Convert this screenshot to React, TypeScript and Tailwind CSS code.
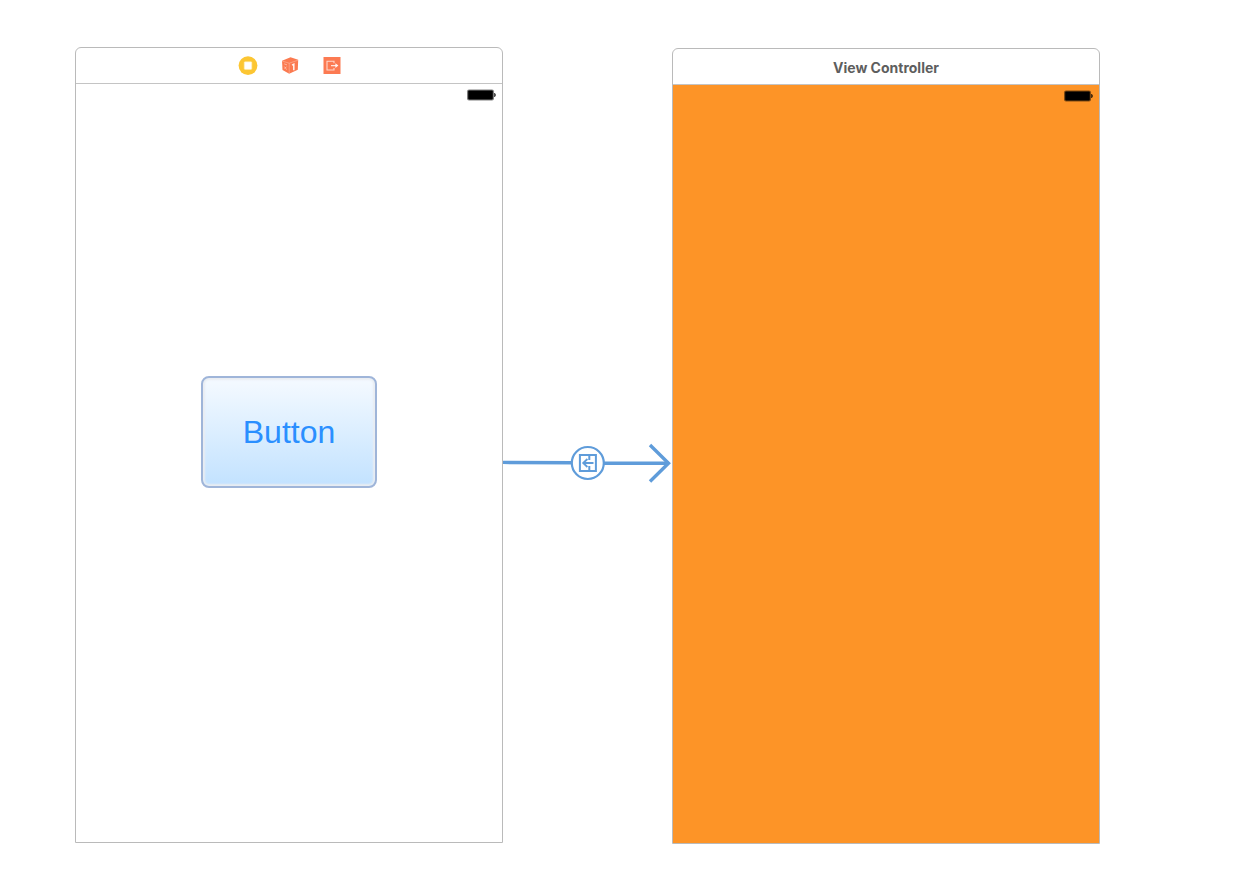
import type { ReactNode } from 'react';

interface SceneProps {
  label: string;
  header: ReactNode;
  canvasClass: string;
  children?: ReactNode;
}

function BatteryIcon() {
  return (
    <svg width="30" height="14" viewBox="0 0 30 14" aria-hidden="true">
      <rect x="1" y="1.5" width="27" height="11" rx="2" fill="#000" fillOpacity="0.5" />
      <rect x="2.2" y="2.6" width="24.6" height="8.8" rx="0.8" fill="#000" />
      <path d="M28.2 5h.6q1 .8 1 2t-1 2h-.6z" fill="#000" fillOpacity="0.85" />
    </svg>
  );
}

function ViewControllerIcon() {
  return (
    <svg width="20" height="20" viewBox="0 0 20 20" aria-hidden="true">
      <circle cx="10" cy="9.6" r="9.4" fill="#fcc633" />
      <rect x="6.2" y="5.8" width="7.6" height="7.6" rx="0.8" fill="#fff" stroke="#fde9a6" strokeWidth="0.6" />
    </svg>
  );
}

function FirstResponderIcon() {
  return (
    <svg width="20" height="20" viewBox="0 0 20 20" aria-hidden="true">
      <path d="M2 4.8 10.5 1.2 18.2 3.8 17.8 13.8 9.2 17.8 2.5 14z" fill="#fb7a50" />
      <path d="M2 5 9.2 7.2 18 4.2M9.2 7.2v10.4" fill="none" stroke="#fff" strokeOpacity="0.35" strokeWidth="0.8" />
      <path d="M12 9.1l1.8-.9v6" fill="none" stroke="#fff" strokeOpacity="0.9" strokeWidth="1.5" />
      <path d="M4.2 7.9l2.8 1M4.4 10.6l2.2 3M6.6 10.6l-2 2" fill="none" stroke="#fff" strokeOpacity="0.5" strokeWidth="0.9" />
    </svg>
  );
}

function ExitIcon() {
  return (
    <svg width="20" height="20" viewBox="0 0 20 20" aria-hidden="true">
      <rect x="1.5" y="1" width="17" height="17" fill="#fc7a52" />
      <path d="M12 7.2V5.2H5v8.8h7v-2" fill="none" stroke="#fff" strokeOpacity="0.7" strokeWidth="1.1" />
      <path d="M9 9.6h5" fill="none" stroke="#fff" strokeOpacity="0.8" strokeWidth="1.2" />
      <path d="M13.4 7.2 16.4 9.6l-3 2.4z" fill="#fff" fillOpacity="0.9" />
    </svg>
  );
}

function SegueArrow() {
  return (
    <svg
      className="-mx-px h-10 w-[171px] shrink-0"
      viewBox="0 0 171 40"
      fill="none"
      stroke="#5f9cda"
      role="img"
      aria-label="Show segue"
    >
      <path d="M1 19.4 70 19.8M102 20.2h65" strokeWidth="3.4" />
      <path d="M148 2 166.5 20.2 148 38.5" strokeWidth="3.4" />
      <circle cx="85.8" cy="20" r="16" strokeWidth="2.2" fill="#fff" />
      <rect x="77.9" y="12" width="16" height="16" strokeWidth="2" />
      <path d="M87.3 12v5M87.3 23v5" strokeWidth="2" />
      <path d="M91.5 20H81.5M85.4 16 81.2 20l4.2 4" strokeWidth="1.8" />
    </svg>
  );
}

function Scene({ label, header, canvasClass, children }: SceneProps) {
  return (
    <section
      aria-label={label}
      className="flex flex-1 flex-col overflow-hidden rounded-t-md border border-[#bababa] bg-white"
    >
      <header className="flex h-9 items-center justify-center border-b border-[#c4c4c4]">{header}</header>
      <div className={`flex flex-1 flex-col ${canvasClass}`}>
        <div className="flex justify-end px-1.5 pt-1">
          <BatteryIcon />
        </div>
        {children}
      </div>
    </section>
  );
}

export default function App() {
  return (
    <main className="grid min-h-screen grid-cols-[1fr_169px_1fr] bg-white pt-[47px] pr-[134px] pb-8 pl-[75px] font-['Inter','Liberation_Sans',sans-serif]">
      {/* Source scene */}
      <div className="flex flex-col pb-px">
        <Scene
          label="Source scene"
          canvasClass="bg-white"
          header={
            <div className="flex gap-[22px] pl-0.5">
              <ViewControllerIcon />
              <FirstResponderIcon />
              <ExitIcon />
            </div>
          }
        >
          <div className="flex flex-1 items-center justify-center pb-20">
            <button
              type="button"
              className="h-28 w-44 rounded-lg border-2 border-[#9fb5d9] bg-linear-to-b from-[#f5faff] to-[#c2e2ff] font-['Liberation_Sans',Arial,sans-serif] text-[32px] text-[#2a8fff] shadow-[inset_0_0_2px_2px_#e9edf2]"
            >
              Button
            </button>
          </div>
        </Scene>
      </div>

      {/* Segue between the scenes */}
      <div className="flex items-center justify-center pt-[34px]">
        <SegueArrow />
      </div>

      {/* Destination scene */}
      <div className="flex flex-col pt-px">
        <Scene
          label="Destination scene"
          canvasClass="bg-[#fd9427]"
          header={<h2 className="pt-0.5 text-sm font-bold text-[#5e5e5e]">View Controller</h2>}
        />
      </div>
    </main>
  );
}
